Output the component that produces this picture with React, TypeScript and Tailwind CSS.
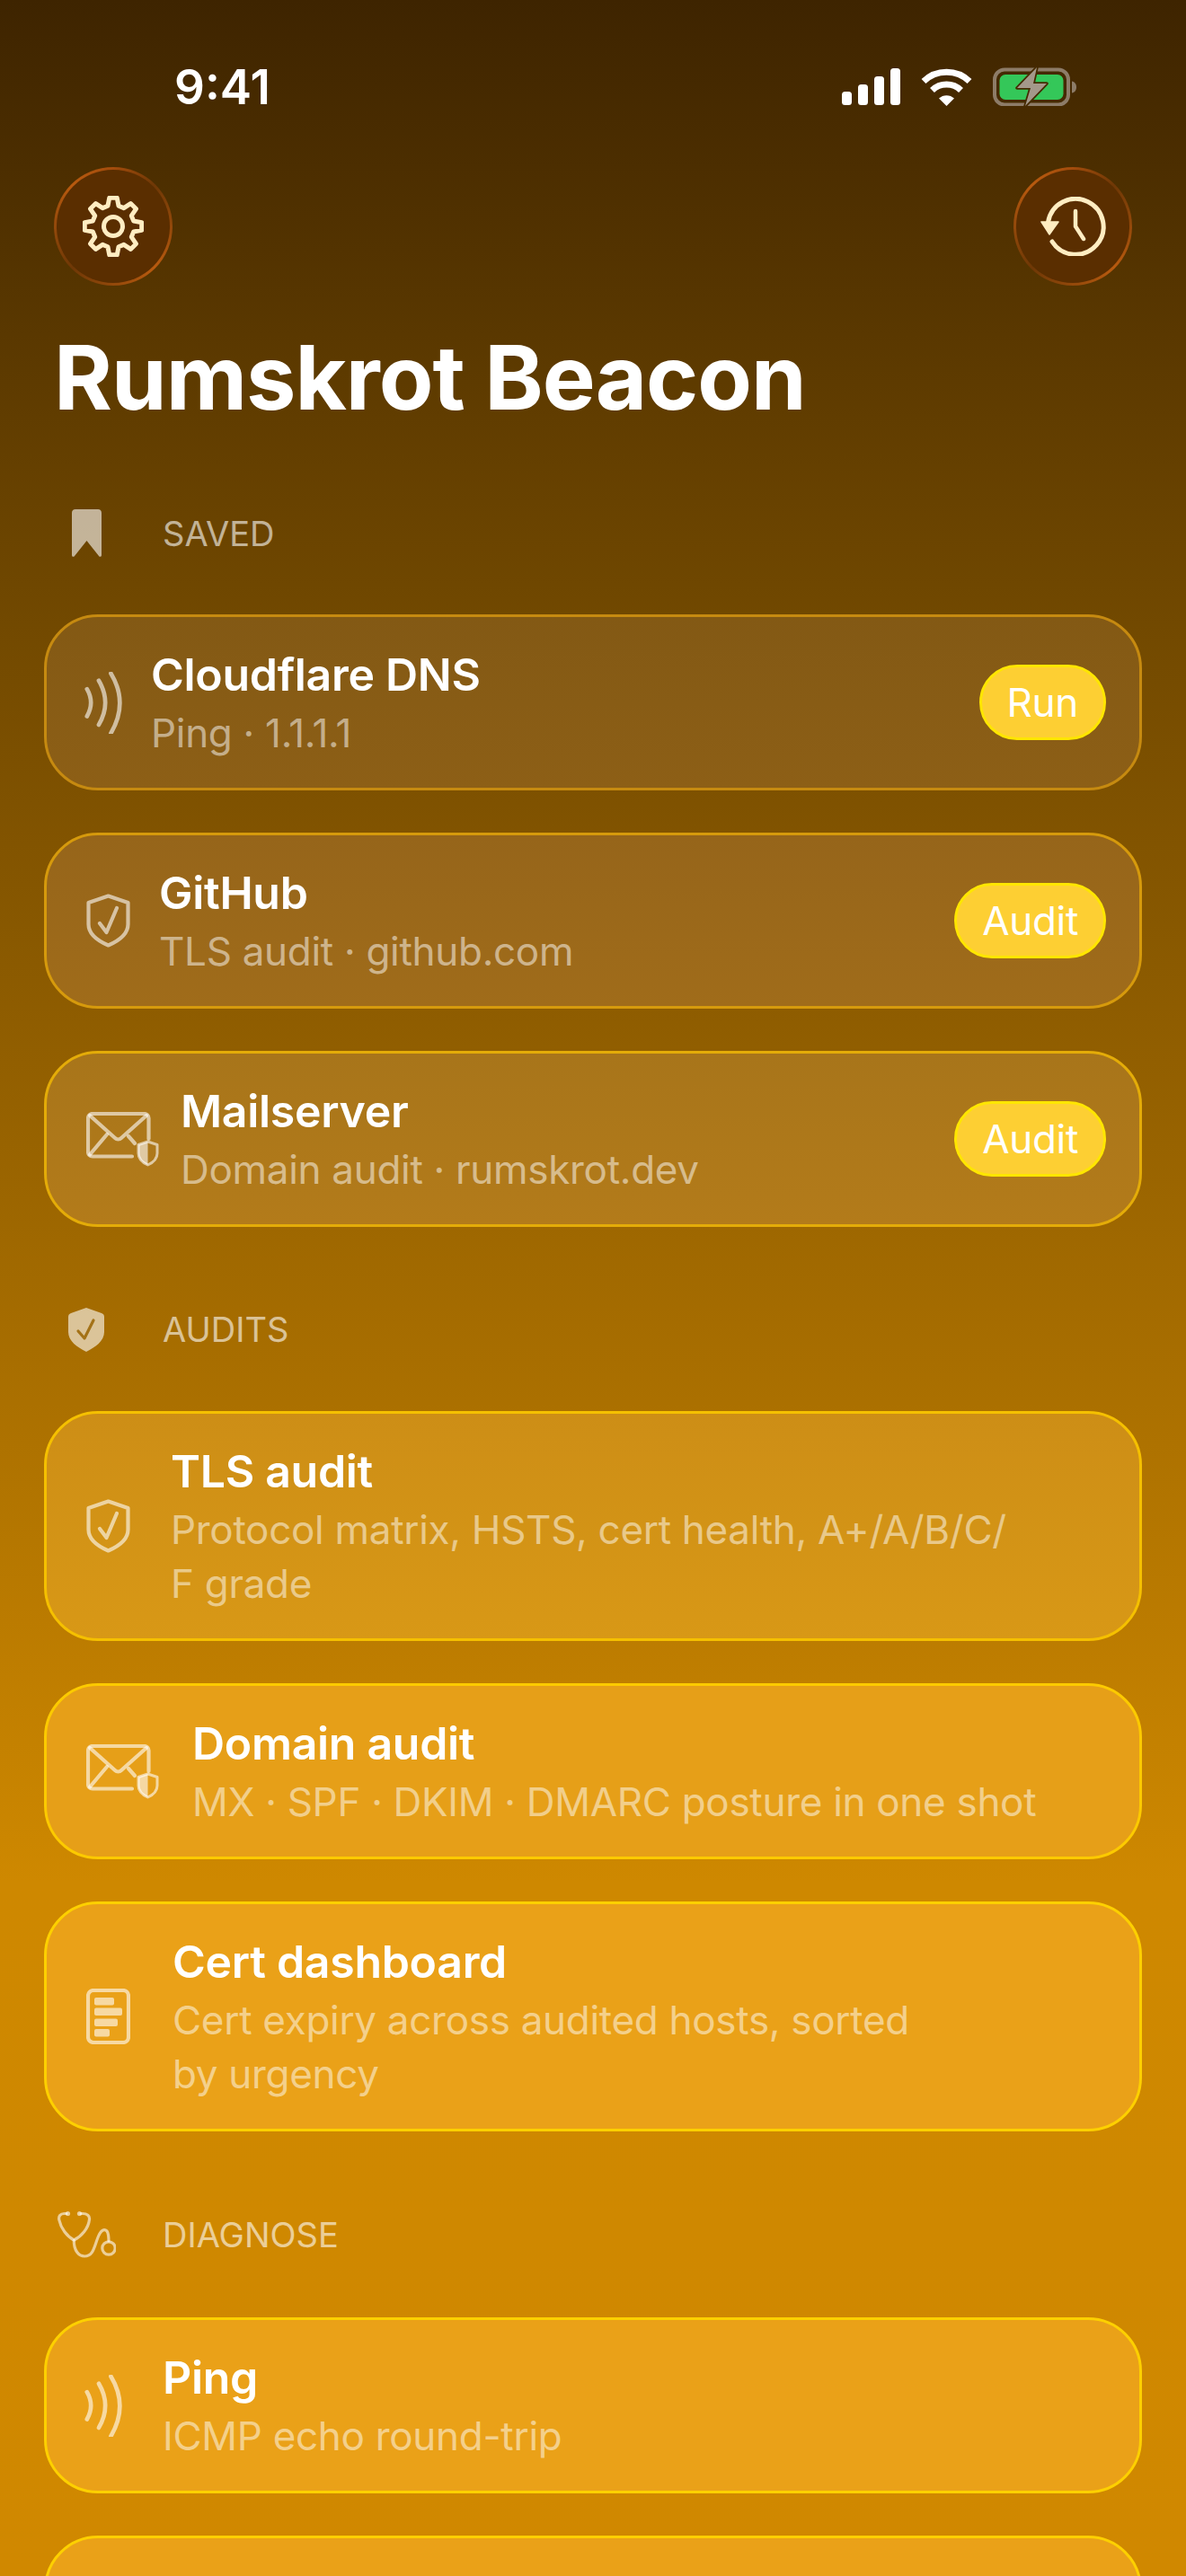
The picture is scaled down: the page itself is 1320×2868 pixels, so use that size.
import React from "react";

const gearPath = (() => {
  const pts: string[] = [];
  const n = 8;
  const R = 32;
  const r = 23.5;
  for (let i = 0; i < n; i++) {
    const a = (i * 2 * Math.PI) / n - Math.PI / 2;
    const step = (2 * Math.PI) / n;
    const list: [number, number][] = [
      [r, a - step * 0.33],
      [R, a - step * 0.17],
      [R, a + step * 0.17],
      [r, a + step * 0.33],
    ];
    list.forEach(([rad, ang]) => {
      pts.push(`${(34 + rad * Math.cos(ang)).toFixed(2)} ${(34 + rad * Math.sin(ang)).toFixed(2)}`);
    });
  }
  return "M" + pts.join(" L") + " Z";
})();

const Gear = () => (
  <svg width="68" height="68" viewBox="0 0 68 68" fill="none" stroke="#ffedc2" strokeWidth="5" strokeLinejoin="round">
    <path d={gearPath} />
    <circle cx="34" cy="34" r="10.5" />
  </svg>
);

const History = () => (
  <svg width="73" height="66" viewBox="0 0 73 66" fill="none">
    <path d="M13 50A31 31 0 1 0 8.6 28" stroke="#ffedc2" strokeWidth="5" strokeLinecap="round" />
    <path d="M1 28H20L10 42Z" fill="#ffedc2" stroke="#ffedc2" strokeWidth="1.5" strokeLinejoin="round" />
    <path d="M39 16V33L48 47" stroke="#ffedc2" strokeWidth="4.5" strokeLinecap="round" strokeLinejoin="round" />
  </svg>
);

const Signal = () => (
  <svg width="65" height="41" viewBox="0 0 65 41" fill="#fff">
    <rect x="0" y="26" width="11" height="15" rx="3.5" />
    <rect x="18" y="18" width="11" height="23" rx="3.5" />
    <rect x="36" y="9" width="11" height="32" rx="3.5" />
    <rect x="54" y="0" width="11" height="41" rx="3.5" />
  </svg>
);

const Wifi = () => (
  <svg width="57" height="42" viewBox="0 0 57 42" fill="none" stroke="#fff">
    <path d="M3 14.5A37 37 0 0 1 54 14.5" strokeWidth="7" />
    <path d="M12.5 24.5A23 23 0 0 1 44.5 24.5" strokeWidth="7" />
    <path d="M20 33.5A12.5 12.5 0 0 1 37 33.5L28.5 42Z" fill="#fff" stroke="none" />
  </svg>
);

const Battery = () => (
  <svg width="93" height="43" viewBox="0 0 93 43" fill="none">
    <rect x="2" y="2.5" width="82" height="39" rx="11" stroke="#8d7c68" strokeWidth="4" />
    <rect x="7.5" y="8" width="71" height="28" rx="6.5" fill="#34c759" />
    <path d="M88 15.5C91 16 93 18.5 93 22C93 25.5 91 28 88 28.5Z" fill="#8d7c68" />
    <path d="M49 0L27 23H42L36 43L60 18H45Z" fill="#a4988a" stroke="#452a00" strokeWidth="3.5" strokeLinejoin="round" paintOrder="stroke" />
  </svg>
);

const Bookmark = () => (
  <svg width="33" height="53" viewBox="0 0 33 53" fill="currentColor">
    <path d="M4 0H29C31.5 0 33 1.5 33 4V51C33 53 31 53.5 30 52L16.5 35L3 52C2 53.5 0 53 0 51V4C0 1.5 1.5 0 4 0Z" />
  </svg>
);

const ShieldFilled = () => (
  <svg width="40" height="49" viewBox="0 0 40 49" fill="none">
    <path d="M20 0L37 6C39 6.7 40 8 40 10V27C40 37 30 44 20 49C10 44 0 37 0 27V10C0 8 1 6.7 3 6Z" fill="currentColor" />
    <path d="M11 26L18 34L28 14" stroke="#9a6400" strokeOpacity="0.85" strokeWidth="3.2" strokeLinecap="round" strokeLinejoin="round" />
  </svg>
);

const Stethoscope = () => (
  <svg width="65" height="53" viewBox="0 0 65 53" fill="none" stroke="currentColor" strokeWidth="3.2" strokeLinecap="round" strokeLinejoin="round">
    <path d="M10 3.5H7.5C3 3.5 1 6.5 1.8 10.5C3.8 20 10.5 29 18.3 33C26.5 29 34.5 20 35.5 10C36 6 33 3.5 28 3.5H26" />
    <path d="M18.3 33C18 45 24 51 30 51C40 51 41 40 45 30C48 22 52 20 55 23C57 26 57 30 57 34" />
    <circle cx="57" cy="42" r="7.2" />
    <circle cx="11.5" cy="3.5" r="2.6" fill="currentColor" stroke="none" />
    <circle cx="24.5" cy="3.5" r="2.6" fill="currentColor" stroke="none" />
  </svg>
);

const PingIcon = () => (
  <svg width="44" height="69" viewBox="0 0 130 205" fill="none" stroke="currentColor" strokeWidth="14" strokeLinecap="round" className="-ml-[2px]">
    <path d="M8 57Q34 102 8 147" />
    <path d="M47 29Q90 102 47 175" />
    <path d="M87 5Q146 102 87 203" />
  </svg>
);

const ShieldCheck = () => (
  <svg width="49" height="60" viewBox="0 0 49 60" fill="none" stroke="currentColor" strokeWidth="4.2" strokeLinecap="round" strokeLinejoin="round">
    <path d="M24.5 2.5L46.5 10V34C46.5 45 35 53 24.5 57.5C14 53 2.5 45 2.5 34V10Z" />
    <path d="M15 33L22.5 43L34 16" />
  </svg>
);

const MailShield = () => (
  <svg width="81" height="61" viewBox="0 0 81 61" fill="none" stroke="currentColor" strokeWidth="4.2" strokeLinecap="round" strokeLinejoin="round">
    <path d="M69.5 30V7C69.5 4 67.5 2 64.5 2H7C4 2 2 4 2 7V44.5C2 47.5 4 49.5 7 49.5H51" />
    <path d="M4 4L32 29C34 31 37 31 39 29L67 4" />
    <path d="M4 47.5L23 25" />
    <path d="M47 27L54 35" />
    <path d="M68.5 33L79 36.5V46C79 52 74 56.5 68.5 59C63 56.5 58 52 58 46V36.5Z" strokeWidth="3" />
    <path d="M68.5 33V59C63 56.5 58 52 58 46V36.5Z" fill="currentColor" stroke="none" />
  </svg>
);

const DocIcon = () => (
  <svg width="49" height="62" viewBox="0 0 49 62" fill="none">
    <rect x="2" y="2" width="45" height="58" rx="6" stroke="currentColor" strokeWidth="4.2" />
    <g fill="currentColor">
      <rect x="9" y="10" width="22" height="8.5" rx="2" />
      <rect x="9" y="21.5" width="31" height="8.5" rx="2" />
      <rect x="9" y="33.5" width="26" height="8.5" rx="2" />
      <rect x="9" y="45" width="17" height="8.5" rx="2" />
    </g>
  </svg>
);

type CardProps = {
  title?: string;
  sub?: React.ReactNode;
  icon?: React.ReactNode;
  iconBox?: string;
  tone: string;
  action?: string;
};

const Card = ({ title, sub, icon, iconBox, tone, action }: CardProps) => (
  <div className={`flex items-center rounded-[60px] border-[3px] pl-[44px] pr-[37px] py-[31px] ${tone}`}>
    <div className={`flex shrink-0 items-center text-white/60 ${iconBox}`}>{icon}</div>
    <div className="min-w-0 flex-1">
      <div className="text-[50px] font-semibold leading-[66px] tracking-[-0.3px] text-white">{title}</div>
      <div className="mt-[2px] text-[44px] leading-[60px] tracking-[-0.3px] text-white/50">{sub}</div>
    </div>
    {action && (
      <div className="flex h-[84px] shrink-0 items-center rounded-full border-[3px] border-[#ffe600] bg-[#fdcf33] px-[28px] text-[44px] tracking-[-0.3px] text-white">
        {action}
      </div>
    )}
  </div>
);

const Section = ({ icon, label, cls }: { icon: React.ReactNode; label: string; cls: string }) => (
  <div className={`flex items-center px-[14px] text-white/60 ${cls}`}>
    <div className="flex w-[66px] shrink-0 justify-center">{icon}</div>
    <div className="ml-[52px] text-[38px] leading-[50px]">{label}</div>
  </div>
);

const CircleButton = ({ children }: { children: React.ReactNode }) => (
  <div className="h-[132px] w-[132px] rounded-full bg-[conic-gradient(from_0deg,#a34c0c,#6f3806_45deg,#b85a0f_135deg,#6f3806_225deg,#b85a0f_315deg,#a34c0c)] p-[3px]">
    <div className="flex h-full w-full items-center justify-center rounded-full bg-[#5a2e00]">{children}</div>
  </div>
);

export default function App() {
  return (
    <div
      className="h-[2868px] w-[1320px] overflow-hidden bg-[linear-gradient(180deg,#3e2400_0%,#6f4700_22.7%,#ce8800_73%,#d08800_100%)] text-white"
      style={{ fontFamily: "Inter, 'Noto Sans', sans-serif" }}
    >
      <div className="flex h-[186px] items-start justify-between pl-[194px] pr-[122px] pt-[66px]">
        <div className="text-[53px] font-semibold leading-[62px]">9:41</div>
        <div className="mt-[9px] flex items-center">
          <Signal />
          <div className="ml-[23px]">
            <Wifi />
          </div>
          <div className="ml-[23px]">
            <Battery />
          </div>
        </div>
      </div>

      <div className="flex justify-between px-[60px]">
        <CircleButton>
          <Gear />
        </CircleButton>
        <CircleButton>
          <History />
        </CircleButton>
      </div>

      <h1 className="ml-[60px] mt-[42px] text-[99px] font-bold leading-[120px] tracking-[-1px] text-white">
        Rumskrot Beacon
      </h1>

      <div className="px-[49px]">
        <Section cls="mt-[87px]" icon={<Bookmark />} label="SAVED" />
        <div className="mt-[64px] flex flex-col gap-[47px]">
          <Card
            title="Cloudflare DNS"
            sub="Ping · 1.1.1.1"
            icon={<PingIcon />}
            iconBox="w-[72px]"
            tone="border-[#c68a10] bg-[linear-gradient(180deg,#835914,#8d5f16)]"
            action="Run"
          />
          <Card
            title="GitHub"
            sub="TLS audit · github.com"
            icon={<ShieldCheck />}
            iconBox="w-[81px]"
            tone="border-[#d69a0c] bg-[linear-gradient(180deg,#96651a,#a06c1a)]"
            action="Audit"
          />
          <Card
            title="Mailserver"
            sub="Domain audit · rumskrot.dev"
            icon={<MailShield />}
            iconBox="w-[105px]"
            tone="border-[#e4ac08] bg-[linear-gradient(180deg,#a8751a,#b37b1a)]"
            action="Audit"
          />
        </div>

        <Section cls="mt-[89px]" icon={<ShieldFilled />} label="AUDITS" />
        <div className="mt-[66px] flex flex-col gap-[47px]">
          <Card
            title="TLS audit"
            sub={
              <>
                Protocol matrix, HSTS, cert health, A+/A/B/C/
                <br />F grade
              </>
            }
            icon={<ShieldCheck />}
            iconBox="w-[94px]"
            tone="border-[#f5c000] bg-[linear-gradient(180deg,#cd8e16,#d89816)]"
          />
          <Card
            title="Domain audit"
            sub="MX · SPF · DKIM · DMARC posture in one shot"
            icon={<MailShield />}
            iconBox="w-[118px]"
            tone="border-[#fcca00] bg-[#e69f18]"
          />
          <Card
            title="Cert dashboard"
            sub={
              <>
                Cert expiry across audited hosts, sorted
                <br />
                by urgency
              </>
            }
            icon={<DocIcon />}
            iconBox="w-[96px]"
            tone="border-[#fdd000] bg-[#eaa118]"
          />
        </div>

        <Section cls="mt-[88px]" icon={<Stethoscope />} label="DIAGNOSE" />
        <div className="mt-[66px] flex flex-col gap-[47px]">
          <Card
            title="Ping"
            sub="ICMP echo round-trip"
            icon={<PingIcon />}
            iconBox="w-[85px]"
            tone="border-[#fdd000] bg-[#eaa118]"
          />
          <Card tone="h-[194px] shrink-0 border-[#fdd000] bg-[#eaa118]" />
        </div>
      </div>
    </div>
  );
}
